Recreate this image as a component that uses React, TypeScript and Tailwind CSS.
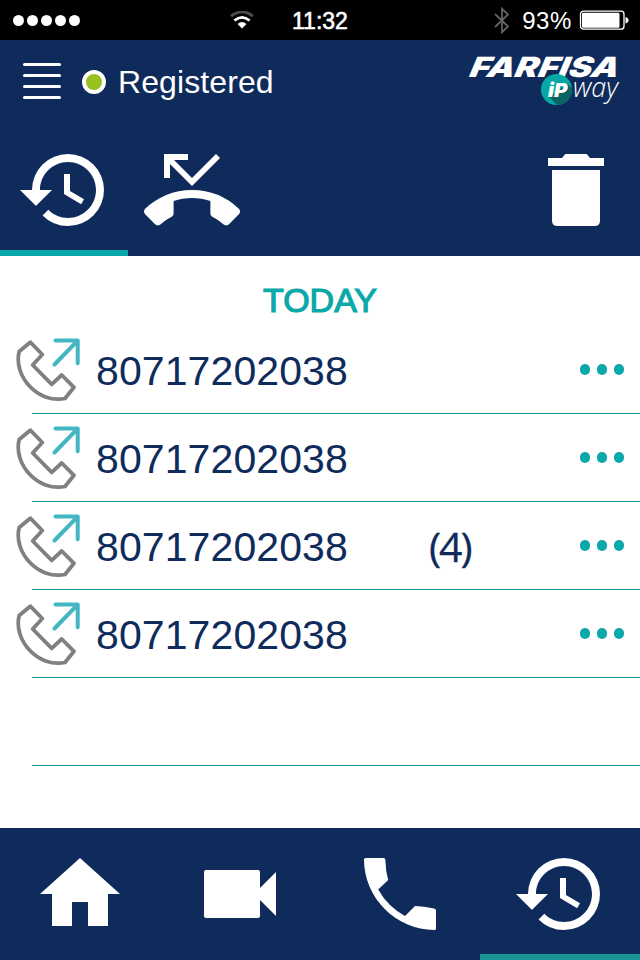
import { MdHistory, MdHome, MdPhoneMissed } from "react-icons/md"

const calls = [
  { number: "80717202038", count: "" },
  { number: "80717202038", count: "" },
  { number: "80717202038", count: "(4)" },
  { number: "80717202038", count: "" },
]

function TrashIcon({ className }: { className?: string }) {
  return (
    <svg className={className} viewBox="0 0 24 24" fill="currentColor">
      <path d="M6 7h12v12.600q0 1.400-1.400 1.400H7.400Q6 21 6 19.600zM5 4h3.500l.8-1h5.400l.8 1H19v2H5z" />
    </svg>
  )
}

function VideoIcon({ className }: { className?: string }) {
  return (
    <svg className={className} viewBox="0 0 24 24" fill="currentColor">
      <path d="M17 10.500v-4q0-.5-.5-.5h-13q-.5 0-.5.5v11q0 .5.5.5h13q.5 0 .5-.5v-4l4 4v-11z" />
    </svg>
  )
}

function PhoneIcon({ className }: { className?: string }) {
  return (
    <svg className={className} viewBox="0 0 24 24" fill="currentColor">
      <path d="M3.400 3H7.900q.4 0 .45.500L8.550 6.200l.5 2.300-2.500 2.400q2.400 4.300 6.700 6.600l2.500-2.500 2.300.2 2.450.4q.5.1.5.5v4.500q0 .4-.4.4C11 21 3 13 3 3.400q0-.4.4-.4z" />
    </svg>
  )
}

const navItems = [
  { name: "home", icon: MdHome, active: false },
  { name: "video", icon: VideoIcon, active: false },
  { name: "call", icon: PhoneIcon, active: false },
  { name: "history", icon: MdHistory, active: true },
]

function StatusBar() {
  return (
    <div className="h-10 bg-black flex items-center text-white">
      <div className="w-[292px] flex items-center justify-between pl-[13px] pr-[38px]">
        <div className="flex gap-[3px]">
          {[0, 1, 2, 3, 4].map((dot) => (
            <span key={dot} className="w-[11px] h-[11px] rounded-full bg-white" />
          ))}
        </div>
        <svg className="w-6 h-[18px]" viewBox="0 0 24 18" fill="none">
          <path d="M1 5.2Q12 -3.4 23 5.2" stroke="#4d4d4d" strokeWidth="2.8" />
          <path d="M4.4 9.500Q12 3.200 19.600 9.500" stroke="#fff" strokeWidth="2.8" />
          <path d="M7.6 13.1Q12 9 16.400 13.1L12 17.6Z" fill="#fff" />
        </svg>
      </div>
      <div className="text-[23px] leading-none [-webkit-text-stroke:0.6px] pt-0.5">11:32</div>
      <div className="flex-1 flex items-center justify-end pr-[11px]">
        <svg className="w-4 h-[27px] mr-[12px]" viewBox="0 0 16 27" fill="none" stroke="#636363" strokeWidth="1.8">
          <path d="M1 7L14 19.5L8 25.2V1.8L14 7.5L1 20" />
        </svg>
        <span className="text-[24px] leading-none tracking-[0.6px] mr-[7px] pt-px">93%</span>
        <svg className="w-[50px] h-5" viewBox="0 0 50 20">
          <rect x="1.500" y="1.2" width="43.500" height="18" rx="3" fill="none" stroke="#fff" strokeWidth="1.3" />
          <rect x="3" y="2.8" width="37.500" height="15" rx="1.2" fill="#fff" />
          <path d="M46.500 7c4 .6 4 6 0 6.600z" fill="#fff" />
        </svg>
      </div>
    </div>
  )
}

function Logo() {
  return (
    <svg className="w-[154px] h-[54px] overflow-visible" viewBox="0 0 154 54">
      <text
        x="0"
        y="24.500"
        textLength="149"
        lengthAdjust="spacingAndGlyphs"
        fill="#fff"
        transform="translate(4 0) skewX(-12)"
        className="font-['Inter'] font-black italic text-[28px]"
      >
        FARFISA
      </text>
      <circle cx="86.500" cy="37.500" r="15.500" fill="#06a8a6" />
      <path d="M97.500 32L101.800 36A15.500 15.500 0 0 1 87 53L79 45Z" fill="#0b6464" />
      <text
        x="78"
        y="45"
        textLength="19.500"
        lengthAdjust="spacingAndGlyphs"
        fill="#fff"
        className="font-['Inter'] font-black italic text-[19px]"
      >
        iP
      </text>
      <text
        x="103"
        y="45"
        textLength="45"
        lengthAdjust="spacingAndGlyphs"
        fill="#fff"
        className="font-['Open_Sans'] font-light italic text-[28px]"
      >
        way
      </text>
    </svg>
  )
}

function OutgoingCallIcon() {
  return (
    <svg className="w-16 h-16" viewBox="0 0 64 64" fill="none" strokeLinejoin="round" strokeLinecap="round">
      <path
        d="M14.300 4.200L26.300 16.500L16.700 27L35.700 46.300L45.700 37L58 49.300L49 60.500C22 66 -3 38 3.200 13.500Z"
        stroke="#808080"
        strokeWidth="3.800"
      />
      <path d="M39.500 2.600H61.700V25.300M38.500 26.500L61.700 2.600" stroke="#42b6c2" strokeWidth="4" />
    </svg>
  )
}

function Header() {
  return (
    <header className="h-[216px] bg-[#0f2b5b] flex flex-col justify-between">
      <div className="flex items-start justify-between pl-[23px] pr-4 pt-3">
        <div className="flex items-center h-[58px]">
          <div className="flex flex-col gap-2">
            {[0, 1, 2, 3].map((line) => (
              <span key={line} className="w-[38px] h-[3px] rounded-full bg-white" />
            ))}
          </div>
          <span className="w-6 h-6 ml-[21px] mt-0.5 rounded-full border-4 border-white bg-[#97c11f]" />
          <span className="ml-3 pt-0.5 text-[32px] leading-none tracking-[0.1px] text-white">Registered</span>
        </div>
        <Logo />
      </div>
      <div className="flex h-32 text-white">
        <div className="w-32 flex justify-center pt-[14px] border-b-6 border-[#0aa8a8]">
          <MdHistory className="size-24 shrink-0" />
        </div>
        <div className="w-32 flex justify-center pt-[14px]">
          <MdPhoneMissed className="size-24" />
        </div>
        <div className="w-32 flex justify-center pt-[14px] ml-auto">
          <TrashIcon className="size-24" />
        </div>
      </div>
    </header>
  )
}

export default function App() {
  return (
    <div className="w-[640px] h-[960px] flex flex-col overflow-hidden bg-white font-['Liberation_Sans',sans-serif]">
      <StatusBar />
      <Header />

      <main className="flex-1">
        <h2 className="h-[70px] pt-[26px] text-center text-[34px] leading-[36px] text-[#0aa8a8] [-webkit-text-stroke:1.2px]">
          TODAY
        </h2>
        {calls.map((call, index) => (
          <div key={index} className="h-[88px] flex flex-col">
            <div className="flex-1 flex items-center pl-4 pr-4">
              <OutgoingCallIcon />
              <span className="w-[349px] pl-4 pt-[3px] text-[41px] leading-none tracking-[0.1px] text-[#0f2b5b]">
                {call.number}
              </span>
              <span className="font-['Open_Sans'] pt-0.5 text-[41px] leading-none tracking-[-2px] text-[#0f2b5b] [-webkit-text-stroke:0.3px]">
                {call.count}
              </span>
              <div className="ml-auto flex gap-[7px]">
                <span className="w-[10px] h-[11px] rounded-full bg-[#0aa8a8]" />
                <span className="w-[10px] h-[11px] rounded-full bg-[#0aa8a8]" />
                <span className="w-[10px] h-[11px] rounded-full bg-[#0aa8a8]" />
              </div>
            </div>
            <div className="ml-8 h-px bg-[#169594]" />
          </div>
        ))}
        <div className="ml-8 h-[88px] border-b border-[#169594]" />
      </main>

      <nav className="h-[132px] bg-[#0f2b5b] flex text-white">
        {navItems.map((item) => {
          const Icon = item.icon
          return (
            <div
              key={item.name}
              className={`w-40 flex justify-center pt-[18px] border-b-6 ${
                item.active ? "border-[#169594]" : "border-transparent"
              }`}
            >
              <Icon className="size-24" />
            </div>
          )
        })}
      </nav>
    </div>
  )
}
